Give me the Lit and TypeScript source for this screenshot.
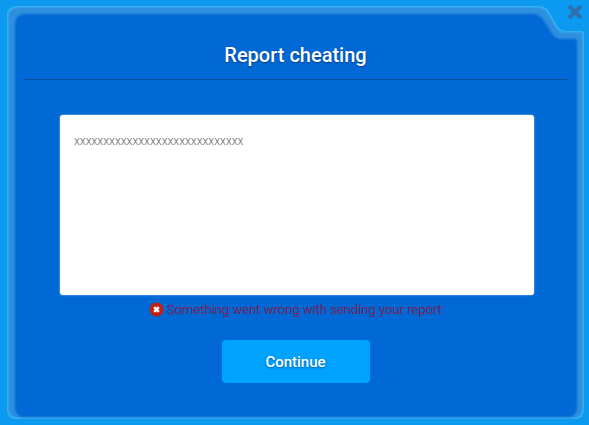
import { css, html, LitElement, svg, TemplateResult } from "lit";
import { customElement, property } from "lit/decorators.js";

// outline of the panel, with the cut corner at the top right
const panelPath = (
  l: number,
  t: number,
  r: number,
  b: number,
  notchX: number,
  notchEndX: number,
  notchY: number,
) =>
  `M${l + 10} ${t}H${notchX}Q${notchX + 6} ${t} ${notchX + 10} ${t + 4}L${notchEndX - 8} ${notchY - 4}Q${notchEndX - 5} ${notchY} ${notchEndX} ${notchY}H${r - 3}Q${r} ${notchY} ${r} ${notchY + 3}V${b - 10}Q${r} ${b} ${r - 10} ${b}H${l + 10}Q${l} ${b} ${l} ${b - 10}V${t + 10}Q${l} ${t} ${l + 10} ${t}Z`;

@customElement("app-root")
export class AppRoot extends LitElement {
  @property()
  heading = "Report cheating";

  @property()
  report = "xxxxxxxxxxxxxxxxxxxxxxxxxxxxx";

  @property()
  error = "Something went wrong with sending your report";

  static styles = css`
    :host {
      display: block;
      position: relative;
      width: 589px;
      height: 425px;
      overflow: hidden;
      background: #0b9af0;
      font-family: Roboto, "Liberation Sans", sans-serif;
    }

    .frame {
      position: absolute;
      inset: 0;
      width: 589px;
      height: 425px;
    }

    .close {
      position: absolute;
      top: 4px;
      left: 567px;
      width: 16px;
      height: 16px;
    }

    .content {
      position: relative;
      display: flex;
      flex-direction: column;
      align-items: center;
      height: 100%;
      box-sizing: border-box;
      padding: 0 22px 0 24px;
    }

    h1 {
      align-self: stretch;
      margin: 0;
      padding-top: 43px;
      height: 80px;
      box-sizing: border-box;
      border-bottom: 1px solid #07529f;
      color: #fff;
      font-size: 20px;
      line-height: 24px;
      font-weight: 500;
      text-align: center;
      text-shadow: 0 1px 2px rgba(0, 30, 80, 0.6);
    }

    .report {
      margin: 35px 0 0 3px;
      width: 474px;
      height: 180px;
      box-sizing: border-box;
      padding: 19px 14px;
      background: #fff;
      border-radius: 3px;
      box-shadow: 0 0 2px rgba(190, 215, 240, 0.9);
      color: #666;
      font-size: 12px;
      font-weight: 300;
      line-height: 14px;
    }

    .error {
      display: flex;
      align-items: center;
      gap: 3px;
      margin-top: 5px;
      height: 18px;
      color: #a1173f;
      font-size: 13px;
      font-weight: 300;
      letter-spacing: 0.05px;
      white-space: nowrap;
      text-shadow: 0 0 1px rgba(10, 40, 110, 0.6);
    }

    .error svg {
      width: 15px;
      height: 15px;
    }

    button {
      margin-top: 22px;
      width: 148px;
      height: 43px;
      border: none;
      border-radius: 4px;
      background: #00a2ff;
      color: #fff;
      font: 500 15px Roboto, "Liberation Sans", sans-serif;
      text-shadow: 0 1px 2px rgba(0, 50, 110, 0.6);
    }
  `;

  render(): TemplateResult<1> {
    return html`
      <svg class="frame" viewBox="0 0 589 425">
        ${svg`
          <defs>
            <filter id="soft" x="-5%" y="-5%" width="110%" height="110%">
              <feGaussianBlur stdDeviation="0.8" />
            </filter>
          </defs>
          <path d=${panelPath(7, 6, 584, 419, 538, 566, 31)} fill="#38bdf8" />
          <path d=${panelPath(8, 7, 583, 418, 537, 565, 32)} fill="#2f8fde" filter="url(#soft)" />
          <path d=${panelPath(15, 14, 577, 417, 532, 561, 39)} fill="#0569d6" filter="url(#soft)" />
        `}
      </svg>
      <svg class="close" viewBox="0 0 16 16">
        <path
          d="M3.2 3.2L12.8 12.8M12.8 3.2L3.2 12.8"
          stroke="#2f70b0"
          stroke-width="4.2"
          stroke-linecap="round"
        />
      </svg>
      <div class="content">
        <h1>${this.heading}</h1>
        <div class="report">${this.report}</div>
        <div class="error">
          <svg viewBox="0 0 16 16">
            <circle cx="8" cy="8" r="7.5" fill="#c2200f" />
            <path
              d="M5.5 5.5L10.5 10.5M10.5 5.5L5.5 10.5"
              stroke="#fff"
              stroke-width="2.6"
            />
          </svg>
          <span>${this.error}</span>
        </div>
        <button>Continue</button>
      </div>
    `;
  }
}
